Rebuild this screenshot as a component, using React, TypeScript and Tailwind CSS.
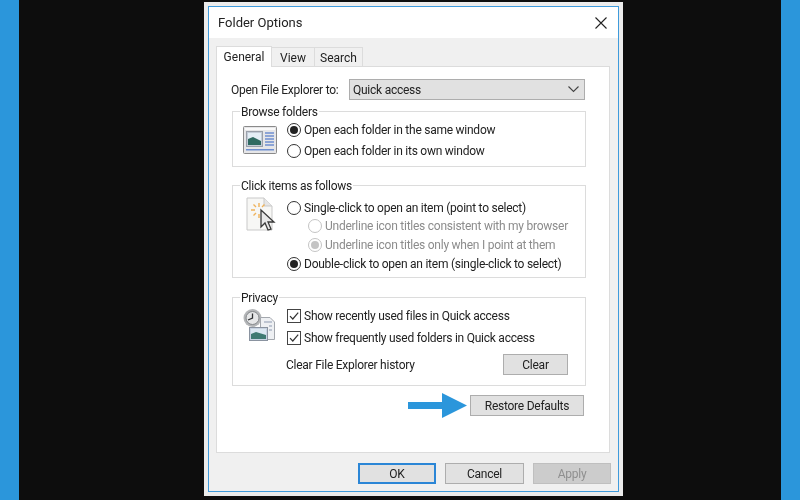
const font = { fontFamily: 'Roboto, "Open Sans", sans-serif' };

const Radio = ({ on = false, off = false }: { on?: boolean; off?: boolean }) => (
  <span
    className={`flex w-[14px] h-[14px] shrink-0 items-center justify-center rounded-full border bg-white ${
      off ? "border-[#c4c4c4]" : "border-[#333333]"
    }`}
  >
    {on && <span className={`w-[8px] h-[8px] rounded-full ${off ? "bg-[#c4c4c4]" : "bg-[#222222]"}`} />}
  </span>
);

const Check = () => (
  <span className="flex w-[14px] h-[14px] shrink-0 items-center justify-center border border-[#444444] bg-white">
    <svg width="12" height="12" viewBox="0 0 12 12" fill="none" stroke="#333333" strokeWidth="1.2">
      <path d="M2 6.2 L4.8 9 L10.2 2.6" />
    </svg>
  </span>
);

const Btn = ({
  label,
  className = "",
  tone = "border border-[#adadad] bg-[#e1e1e1] text-[#222222]",
}: {
  label: string;
  className?: string;
  tone?: string;
}) => <div className={`flex h-[21px] items-center justify-center text-[12px] ${tone} ${className}`}>{label}</div>;

const Group = ({ title, className, children }: { title: string; className: string; children: React.ReactNode }) => (
  <div className={`relative flex border border-[#dcdcdc] bg-white ${className}`}>
    <span className="absolute -top-[8px] left-[7px] bg-white px-[1px] text-[12px] leading-[16px] text-[#222222]">
      {title}
    </span>
    {children}
  </div>
);

const BrowseIcon = () => (
  <svg width="34" height="28" viewBox="0 0 34 28" className="ml-[10px] mt-[14px]">
    <rect x="0.5" y="0.5" width="33" height="27" rx="1" fill="#e6e6e8" stroke="#8a8a8a" />
    <rect x="2" y="2" width="30" height="2" fill="#fafafa" />
    <rect x="3.5" y="5.5" width="16" height="15" fill="#c4ccd8" stroke="#9aa0aa" />
    <rect x="5" y="7" width="13" height="12" fill="#e4eef6" />
    <path d="M5 13 L10 11 L18 15 V19 H5 Z" fill="#2f6a62" />
    <path d="M22 7 H31 M22 10 H31 M22 13 H31 M22 16 H31 M22 19 H31" stroke="#6f8fd0" strokeWidth="1.4" />
    <rect x="3" y="23" width="28" height="1.5" fill="#6f8fd0" />
  </svg>
);

const ClickIcon = () => (
  <svg width="30" height="36" viewBox="0 0 30 36" className="ml-[13px] mt-[11px]">
    <path d="M1 1 H18 L26 9 V33 H1 Z" fill="#f7f7f5" stroke="#c9c9c9" />
    <path d="M18 1 V9 H26" fill="#e6e6e6" stroke="#c9c9c9" />
    <path
      d="M13 6 V10 M13 17 V21 M5 13 H9 M7.5 7.5 L10 10 M7.5 18.5 L10 16 M18.5 7.5 L16 10"
      stroke="#efb25a"
      strokeWidth="1.4"
    />
    <path d="M15 13 V30 L19 26 L22 33 L25 32 L22 25 L28 25 Z" fill="#e8e8e8" stroke="#3a3a3a" strokeWidth="1.3" />
  </svg>
);

const PrivacyIcon = () => (
  <svg width="35" height="35" viewBox="0 0 35 35" className="ml-[9px] mt-[9px]">
    <circle cx="10.5" cy="11" r="9" fill="#b4b6b8" />
    <circle cx="10.5" cy="11" r="6.5" fill="#e6e7e8" stroke="#85888b" />
    <path d="M10.5 6.5 V11 L6 13" stroke="#2f3133" strokeWidth="1.3" fill="none" />
    <path d="M18.5 10.5 H28 L32.5 15 V32.5 H18.5 Z" fill="#eef0f3" stroke="#a4a8ae" />
    <path d="M22 15 H30 M27 19 H30 M27 23 H30" stroke="#8d99b0" />
    <rect x="7.5" y="20.5" width="18" height="13" fill="#c8d3e2" stroke="#8a93a0" />
    <rect x="9" y="22" width="15" height="10" fill="#dce8f2" />
    <path d="M9 27 L14 25 L24 28 V32 H9 Z" fill="#3f7a72" />
  </svg>
);

export default function App() {
  return (
    <div
      className="flex h-[500px] w-[800px] overflow-hidden whitespace-nowrap bg-[#0d0d0d] text-[12px] tracking-[-0.25px] text-[#222222]"
      style={font}
    >
      <div className="w-[19px] bg-[#2b96db]" />
      <div className="flex-1 pl-[185px]">
        <div className="mt-[2px] h-[494px] w-[419px] bg-[#ececec] p-[4px] blur-[0.45px]">
          <div className="flex h-full flex-col border border-[#3f9bdc] bg-[#f0f0f0]">
            <div className="flex h-[31px] items-center justify-between bg-white pl-[9px] pr-[11px]">
              <span className="text-[13px] tracking-normal">Folder Options</span>
              <svg width="12" height="12" viewBox="0 0 12 12" stroke="#222222" strokeWidth="1.1">
                <path d="M0.5 0.5 L11.5 11.5 M11.5 0.5 L0.5 11.5" />
              </svg>
            </div>

            <div className="ml-[7px] mt-[8px] flex h-[20px] items-end tracking-normal">
              <div className="relative z-10 -mb-[1px] flex h-[21px] w-[56px] items-center justify-center border border-b-0 border-[#dcdcdc] bg-white">
                General
              </div>
              <div className="flex h-[19px] w-[43px] items-center justify-center border-r border-t border-[#dcdcdc] pt-[1px]">
                View
              </div>
              <div className="flex h-[19px] w-[48px] items-center justify-center border-r border-t border-[#dcdcdc] pt-[1px]">
                Search
              </div>
            </div>

            <div className="ml-[7px] h-[387px] w-[394px] border border-[#dcdcdc] bg-white pl-[15px] pt-[12px]">
              <div className="flex h-[21px] w-[354px] items-center justify-between pr-[1px]">
                <span className="-ml-[1px] pt-[1px]">Open File Explorer to:</span>
                <div className="flex h-[21px] w-[236px] items-center justify-between border border-[#adadad] bg-[#e1e1e1] pl-[3px] pr-[5px]">
                  <span className="pt-[1px]">Quick access</span>
                  <svg width="11" height="7" viewBox="0 0 11 7" fill="none" stroke="#444444" strokeWidth="1.1">
                    <path d="M0.5 0.5 L5.5 5.5 L10.5 0.5" />
                  </svg>
                </div>
              </div>

              <Group title="Browse folders" className="mt-[11px] h-[56px] w-[354px]">
                <div className="w-[54px]">
                  <BrowseIcon />
                </div>
                <div className="pt-[7px]">
                  <div className="flex h-[21px] items-center gap-[3px]">
                    <Radio on />
                    Open each folder in the same window
                  </div>
                  <div className="flex h-[21px] items-center gap-[3px]">
                    <Radio />
                    Open each folder in its own window
                  </div>
                </div>
              </Group>

              <Group title="Click items as follows" className="mt-[18px] h-[93px] w-[354px]">
                <div className="w-[54px]">
                  <ClickIcon />
                </div>
                <div className="pt-[12px]">
                  <div className="flex h-[19px] items-center gap-[3px]">
                    <Radio />
                    Single-click to open an item (point to select)
                  </div>
                  <div className="ml-[21px] flex h-[18px] items-center gap-[3px] text-[#8c8c8c]">
                    <Radio off />
                    Underline icon titles consistent with my browser
                  </div>
                  <div className="ml-[21px] flex h-[19px] items-center gap-[3px] text-[#8c8c8c]">
                    <Radio on off />
                    Underline icon titles only when I point at them
                  </div>
                  <div className="flex h-[19px] items-center gap-[3px]">
                    <Radio on />
                    Double-click to open an item (single-click to select)
                  </div>
                </div>
              </Group>

              <Group title="Privacy" className="mt-[19px] h-[89px] w-[354px]">
                <div className="w-[54px]">
                  <PrivacyIcon />
                </div>
                <div className="flex-1 pr-[17px] pt-[7px]">
                  <div className="flex h-[22px] items-center gap-[3px]">
                    <Check />
                    Show recently used files in Quick access
                  </div>
                  <div className="flex h-[22px] items-center gap-[3px]">
                    <Check />
                    Show frequently used folders in Quick access
                  </div>
                  <div className="mt-[5px] flex h-[21px] items-center justify-between">
                    <span className="-ml-[1px] pt-[1px]">Clear File Explorer history</span>
                    <Btn label="Clear" className="w-[65px]" />
                  </div>
                </div>
              </Group>

              <div className="mt-[7px] flex w-[352px] items-center justify-end gap-[3px]">
                <svg width="59" height="25" viewBox="0 0 59 25">
                  <path d="M0 9 H34 V0 L59 12.5 L34 25 V16 H0 Z" fill="#2b96db" />
                </svg>
                <Btn label="Restore Defaults" className="w-[114px]" />
              </div>
            </div>

            <div className="mt-[10px] flex justify-end gap-[9px] pr-[7px]">
              <Btn label="OK" className="w-[78px]" tone="border-2 border-[#2b86d6] bg-[#e1e1e1] text-[#222222]" />
              <Btn label="Cancel" className="w-[79px]" />
              <Btn label="Apply" className="w-[78px]" tone="border border-[#bfbfbf] bg-[#cccccc] text-[#8f8f8f]" />
            </div>
          </div>
        </div>
      </div>
      <div className="w-[19px] bg-[#2b96db]" />
    </div>
  );
}
